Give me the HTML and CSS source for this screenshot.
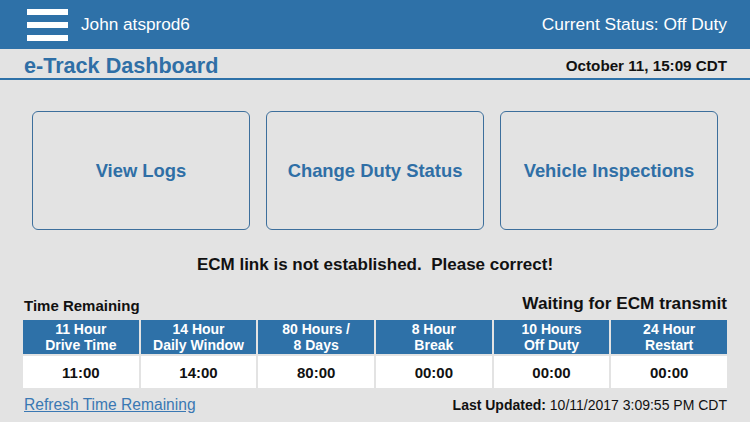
FILE: index.html
```html
<!DOCTYPE html>
<html>
<head>
<meta charset="utf-8">
<link rel="stylesheet" href="styles.css">
</head>
<body>
<header class="topbar">
  <div class="menu"><span></span><span></span><span></span></div>
  <div class="user">John atsprod6</div>
  <div class="status">Current Status: Off Duty</div>
</header>
<div class="subbar">
  <div class="title">e-Track Dashboard</div>
  <div class="date">October 11, 15:09 CDT</div>
</div>
<main>
  <div class="actions">
    <div class="action">View Logs</div>
    <div class="action">Change Duty Status</div>
    <div class="action">Vehicle Inspections</div>
  </div>
  <div class="alert">ECM link is not established.&nbsp; Please correct!</div>
  <div class="trow">
    <div class="tlabel">Time Remaining</div>
    <div class="waiting">Waiting for ECM transmit</div>
  </div>
  <div class="grid">
    <div class="hd">11 Hour<br>Drive Time</div>
    <div class="hd">14 Hour<br>Daily Window</div>
    <div class="hd">80 Hours /<br>8 Days</div>
    <div class="hd">8 Hour<br>Break</div>
    <div class="hd">10 Hours<br>Off Duty</div>
    <div class="hd">24 Hour<br>Restart</div>
    <div class="val">11:00</div>
    <div class="val">14:00</div>
    <div class="val">80:00</div>
    <div class="val">00:00</div>
    <div class="val">00:00</div>
    <div class="val">00:00</div>
  </div>
  <div class="foot">
    <a class="refresh" href="#">Refresh Time Remaining</a>
    <div class="updated"><b>Last Updated:</b> 10/11/2017 3:09:55 PM CDT</div>
  </div>
</main>
</body>
</html>
```
FILE: styles.css
```css
html, body {
  margin: 0;
  padding: 0;
}
body {
  width: 750px;
  height: 422px;
  overflow: hidden;
  background: #e3e3e3;
  font-family: "Liberation Sans", Arial, sans-serif;
  color: #111;
}
.topbar {
  height: 49px;
  background: #2e71a8;
  display: flex;
  align-items: center;
  padding: 0 23px 0 27px;
  color: #fff;
}
.menu {
  width: 41px;
  display: flex;
  flex-direction: column;
  gap: 7px;
  margin-top: 1px;
}
.menu span {
  display: block;
  height: 6px;
  background: #fff;
}
.user {
  margin-left: 13px;
  font-size: 17.2px;
  flex: 1;
}
.status {
  font-size: 17.4px;
}
.subbar {
  height: 29px;
  border-bottom: 2px solid #2e71a8;
  display: flex;
  align-items: center;
  justify-content: space-between;
  padding: 0 23px 0 24px;
}
.title {
  font-size: 21.6px;
  font-weight: bold;
  color: #2f6fa6;
  margin-top: 5px;
}
.date {
  font-size: 15.2px;
  font-weight: bold;
  margin-top: 3px;
}
main {
  padding: 0 23px;
}
.actions {
  display: grid;
  grid-template-columns: repeat(3, 1fr);
  gap: 16px;
  margin: 31px 9px 0;
}
.action {
  box-sizing: border-box;
  height: 119px;
  border: 1.5px solid #3d6f9c;
  border-radius: 6px;
  display: flex;
  align-items: center;
  justify-content: center;
  font-size: 18.4px;
  font-weight: bold;
  color: #2f6fa6;
}
.alert {
  text-align: center;
  font-size: 17px;
  font-weight: bold;
  margin-top: 25px;
}
.trow {
  display: flex;
  justify-content: space-between;
  align-items: flex-end;
  margin-top: 18px;
}
.tlabel {
  font-size: 15px;
  font-weight: bold;
  margin-left: 1px;
}
.waiting {
  font-size: 17.2px;
  font-weight: bold;
}
.grid {
  display: grid;
  grid-template-columns: repeat(6, 1fr);
  column-gap: 2px;
  row-gap: 2px;
  margin-top: 6px;
}
.hd {
  height: 34px;
  background: #2e71a8;
  color: #fff;
  font-weight: bold;
  font-size: 14px;
  line-height: 16px;
  text-align: center;
  display: flex;
  align-items: center;
  justify-content: center;
}
.val {
  height: 32px;
  background: #fff;
  font-size: 15px;
  font-weight: bold;
  display: flex;
  align-items: center;
  justify-content: center;
}
.foot {
  display: flex;
  justify-content: space-between;
  align-items: center;
  margin-top: 8px;
}
.refresh {
  color: #3a78b3;
  font-size: 15.6px;
  margin-left: 1px;
}
.updated {
  font-size: 14px;
}
```
